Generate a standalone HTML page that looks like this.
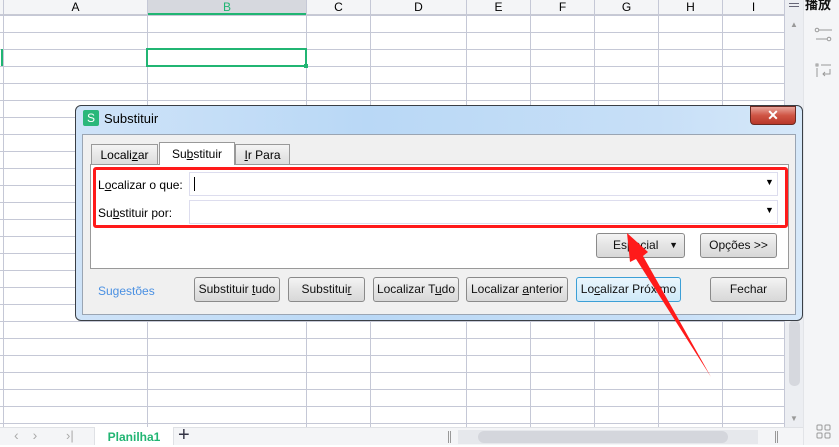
<!DOCTYPE html>
<html><head><meta charset="utf-8"><style>
*{box-sizing:border-box;margin:0;padding:0}
body{width:839px;height:445px;overflow:hidden;background:#fff;font-family:"Liberation Sans","Noto Sans CJK SC",sans-serif;font-size:12px;color:#000;position:relative}
.abs{position:absolute}
.hdr{top:0;height:15px;background:#f4f5f7;border-bottom:1px solid #c8cad4;font-size:12px;text-align:center;line-height:15px;color:#222}
.btn{position:absolute;height:25px;border:1px solid #8a8a8a;border-radius:3px;background:linear-gradient(#f4f4f4,#e4e4e4 50%,#d8d8d8);text-align:center;line-height:23px;font-size:12px;color:#111}
.u{text-decoration:underline}
</style></head><body>
<!-- grid -->
<div class="abs" style="left:0;top:0;width:784px;height:427px;
background-image:linear-gradient(#c5c8d6 1px,transparent 1px);background-size:100% 17px;background-position:0 15px"></div>
<div class="abs hdr" style="left:0;width:784px"></div>
<div class="abs" style="left:147px;top:0;width:159px;height:15px;background:#d6d8de;border-bottom:2px solid #21b573"></div>
<!-- column lines -->
<div class="abs" style="left:3px;top:0;width:1px;height:427px;background:#c5c8d6"></div>
<div class="abs" style="left:147px;top:0;width:1px;height:427px;background:#c5c8d6"></div>
<div class="abs" style="left:306px;top:0;width:1px;height:427px;background:#c5c8d6"></div>
<div class="abs" style="left:370px;top:0;width:1px;height:427px;background:#c5c8d6"></div>
<div class="abs" style="left:466px;top:0;width:1px;height:427px;background:#c5c8d6"></div>
<div class="abs" style="left:530px;top:0;width:1px;height:427px;background:#c5c8d6"></div>
<div class="abs" style="left:594px;top:0;width:1px;height:427px;background:#c5c8d6"></div>
<div class="abs" style="left:658px;top:0;width:1px;height:427px;background:#c5c8d6"></div>
<div class="abs" style="left:722px;top:0;width:1px;height:427px;background:#c5c8d6"></div>
<div class="abs" style="left:784px;top:0;width:1px;height:427px;background:#c5c8d6"></div>
<div class="abs" style="left:4px;top:0;width:143px;line-height:15px;text-align:center">A</div>
<div class="abs" style="left:148px;top:0;width:158px;line-height:15px;text-align:center;color:#21b573">B</div>
<div class="abs" style="left:307px;top:0;width:63px;line-height:15px;text-align:center">C</div>
<div class="abs" style="left:371px;top:0;width:95px;line-height:15px;text-align:center">D</div>
<div class="abs" style="left:467px;top:0;width:63px;line-height:15px;text-align:center">E</div>
<div class="abs" style="left:531px;top:0;width:63px;line-height:15px;text-align:center">F</div>
<div class="abs" style="left:595px;top:0;width:63px;line-height:15px;text-align:center">G</div>
<div class="abs" style="left:659px;top:0;width:63px;line-height:15px;text-align:center">H</div>
<div class="abs" style="left:723px;top:0;width:61px;line-height:15px;text-align:center">I</div>
<div class="abs" style="left:1px;top:49px;width:2px;height:17px;background:#21b573"></div>
<div class="abs" style="left:146px;top:48px;width:161px;height:19px;border:2px solid #21b573"></div>
<div class="abs" style="left:304px;top:64px;width:4px;height:4px;background:#21b573"></div>
<!-- vscroll -->
<div class="abs" style="left:785px;top:0;width:18px;height:427px;background:#eceef2"></div>
<div class="abs" style="left:789px;top:3px;width:10px;height:1px;background:#667;box-shadow:0 3px 0 #667"></div>
<div class="abs" style="left:789px;top:320px;width:11px;height:66px;background:#d6d8de;border-radius:5px"></div>
<div class="abs" style="left:790px;top:414px;font-size:8px;color:#999">▼</div>
<div class="abs" style="left:790px;top:20px;font-size:8px;color:#999">▲</div>
<!-- sidebar -->
<div class="abs" style="left:803px;top:0;width:36px;height:445px;background:#f4f5f7;border-left:1px solid #e2e4e8"></div>
<div class="abs" style="left:805px;top:-6px;font-size:13px;font-weight:bold;color:#111">播放</div>
<svg class="abs" style="left:814px;top:26px" width="20" height="20" viewBox="0 0 20 20" fill="none" stroke="#999"><circle cx="3" cy="4" r="1.8"/><line x1="5" y1="4" x2="18" y2="4"/><line x1="2" y1="13" x2="13" y2="13"/><circle cx="15" cy="13" r="1.8"/></svg>
<svg class="abs" style="left:814px;top:62px" width="20" height="20" viewBox="0 0 20 20" fill="none" stroke="#999"><rect x="2" y="2" width="2" height="2"/><line x1="3" y1="6" x2="3" y2="15"/><line x1="7" y1="3" x2="17" y2="3"/><path d="M16 7v5H9M11 10l-2 2 2 2"/></svg>
<svg class="abs" style="left:816px;top:424px" width="16" height="16" viewBox="0 0 16 16" fill="none" stroke="#999"><rect x="1" y="1" width="5" height="5" rx="1"/><rect x="9" y="1" width="5" height="5" rx="1"/><rect x="1" y="9" width="5" height="5" rx="1"/><rect x="9" y="9" width="5" height="5" rx="1"/></svg>
<!-- bottom bar -->
<div class="abs" style="left:0;top:427px;width:803px;height:18px;background:#f4f5f7;border-top:1px solid #dfe1e5"></div>
<div class="abs" style="left:14px;top:427px;color:#aaa;font-size:14px;letter-spacing:14px">‹›</div>
<div class="abs" style="left:66px;top:428px;color:#aaa;font-size:13px">›|</div>
<div class="abs" style="left:94px;top:427px;width:80px;height:18px;background:#fff;border-left:1px solid #dfe1e5;border-right:1px solid #dfe1e5;color:#21b573;font-weight:bold;text-align:center;line-height:20px">Planilha1</div>
<div class="abs" style="left:178px;top:424px;font-size:20px;color:#334">+</div>
<div class="abs" style="left:448px;top:431px;width:3px;height:12px;border-left:1px solid #999;border-right:1px solid #999"></div>
<div class="abs" style="left:458px;top:430px;width:300px;height:14px;background:#e6e8ec"></div>
<div class="abs" style="left:478px;top:431px;width:250px;height:12px;background:#d4d6dc;border-radius:6px"></div>
<div class="abs" style="left:775px;top:431px;width:3px;height:12px;border-left:1px solid #999;border-right:1px solid #999"></div>
<!-- dialog -->
<div class="abs" style="left:75px;top:105px;width:728px;height:216px;border:1px solid #3a3f46;border-radius:6px;background:linear-gradient(90deg,#cfe3f8,#b9d8f6 40%,#c7dff7 80%,#d6e8f9)"></div>
<div class="abs" style="left:83px;top:110px;width:16px;height:16px;background:#2ab77a;color:#fff;font-size:12px;text-align:center;line-height:16px;border-radius:2px">S</div>
<div class="abs" style="left:104px;top:111px;font-size:13px">Substituir</div>
<div class="abs" style="left:750px;top:106px;width:46px;height:19px;border:1px solid #6b2a22;border-radius:0 0 4px 4px;background:linear-gradient(#e8a59b,#cf5444 50%,#b8382a);color:#fff;font-weight:bold;text-align:center;line-height:17px;font-size:14px">✕</div>
<div class="abs" style="left:82px;top:134px;width:714px;height:181px;background:#f0f0f0;border:1px solid #9aa5b3"></div>
<!-- tabs -->
<div class="abs" style="left:91px;top:144px;width:67px;height:21px;border:1px solid #999;background:linear-gradient(#f4f4f4,#dcdcdc);text-align:center;line-height:21px;font-size:12px">Locali<span class="u">z</span>ar</div>
<div class="abs" style="left:159px;top:142px;width:76px;height:23px;border:1px solid #999;border-bottom:none;background:#fff;text-align:center;line-height:22px;z-index:2">Su<span class="u">b</span>stituir</div>
<div class="abs" style="left:235px;top:144px;width:55px;height:21px;border:1px solid #999;background:linear-gradient(#f4f4f4,#dcdcdc);text-align:center;line-height:21px"><span class="u">I</span>r Para</div>
<div class="abs" style="left:90px;top:164px;width:699px;height:105px;border:1px solid #999;background:#fff"></div>
<!-- inputs -->
<div class="abs" style="left:189px;top:172px;width:589px;height:24px;border:1px solid #dde;background:#fff"></div>
<div class="abs" style="left:194px;top:177px;width:1px;height:14px;background:#000"></div>
<div class="abs" style="left:189px;top:200px;width:589px;height:24px;border:1px solid #dde;background:#fff"></div>
<div class="abs" style="left:765px;top:177px;font-size:9px">▼</div>
<div class="abs" style="left:765px;top:205px;font-size:9px">▼</div>
<div class="abs" style="left:98px;top:178px">L<span class="u">o</span>calizar o que:</div>
<div class="abs" style="left:98px;top:206px">Su<span class="u">b</span>stituir por:</div>
<div class="abs" style="left:93px;top:167px;width:695px;height:61px;border:3px solid #ff1a1a;border-radius:3px"></div>
<div class="btn" style="left:596px;top:233px;width:89px;text-align:left;padding-left:16px">Especial<span style="position:absolute;right:6px;font-size:9px">▼</span></div>
<div class="btn" style="left:700px;top:233px;width:77px">Opções &gt;&gt;</div>
<div class="abs" style="left:98px;top:284px;color:#4a90e2">Sugestões</div>
<div class="btn" style="left:194px;top:277px;width:86px">Substituir <span class="u">t</span>udo</div>
<div class="btn" style="left:288px;top:277px;width:77px">Substitui<span class="u">r</span></div>
<div class="btn" style="left:373px;top:277px;width:86px">Localizar T<span class="u">u</span>do</div>
<div class="btn" style="left:466px;top:277px;width:102px">Localizar <span class="u">a</span>nterior</div>
<div class="btn" style="left:576px;top:277px;width:105px;border-color:#3c9fd6;background:linear-gradient(#eaf6fd,#cfe9f8)">Lo<span class="u">c</span>alizar Próximo</div>
<div class="btn" style="left:710px;top:277px;width:77px">Fechar</div>
<!-- arrow -->
<svg class="abs" style="left:0;top:0" width="839" height="445"><polygon points="627,233 648,252 643,256 711,377 636,259 630,262" fill="#ff1a1a"/></svg>
</body></html>
